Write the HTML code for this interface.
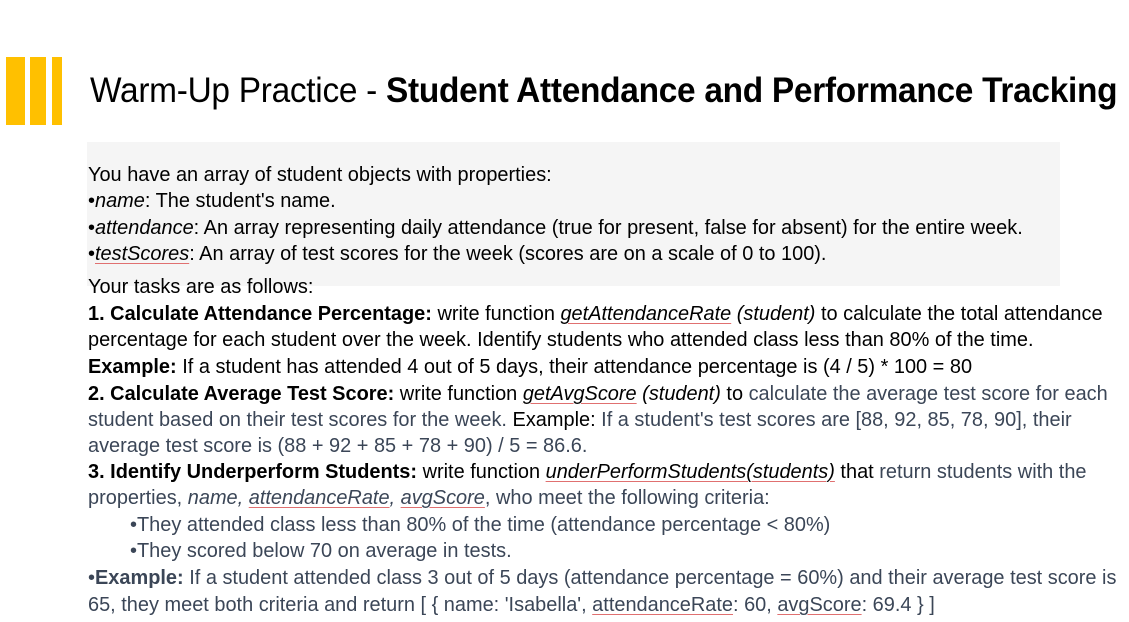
<!DOCTYPE html>
<html><head><meta charset="utf-8"><style>
body{margin:0;width:1129px;height:622px;background:#fff;position:relative;overflow:hidden;font-family:"Liberation Sans",sans-serif;}
.bar{position:absolute;top:57px;height:68px;background:#ffc000;}
.t{position:absolute;left:90px;top:71px;font-size:35px;white-space:nowrap;color:#000;transform:scaleX(0.955);transform-origin:left;letter-spacing:-0.3px}
.box{position:absolute;left:87px;top:142px;width:973px;height:144px;background:#f5f5f5;}
.l{position:absolute;left:88px;font-size:20px;line-height:26px;white-space:nowrap;color:#000;transform:scaleX(0.997);transform-origin:left;}
.g{color:#3b4657}
.u{text-decoration:underline;text-decoration-color:#e07070;text-decoration-thickness:1px;text-underline-offset:3px}
</style></head><body>
<div class="bar" style="left:6px;width:19px"></div>
<div class="bar" style="left:30px;width:16px"></div>
<div class="bar" style="left:52px;width:10px"></div>
<div class="t">Warm-Up Practice - <b>Student Attendance and Performance Tracking</b></div>
<div class="box"></div>
<div class="l" style="top:162px">You have an array of student objects with properties:</div>
<div class="l" style="top:188px">•<i>name</i>: The student's name.</div>
<div class="l" style="top:215px">•<i>attendance</i>: An array representing daily attendance (true for present, false for absent) for the entire week.</div>
<div class="l" style="top:241px">•<i class="u">testScores</i>: An array of test scores for the week (scores are on a scale of 0 to 100).</div>
<div class="l" style="top:274px">Your tasks are as follows:</div>
<div class="l" style="top:301px"><b>1. Calculate Attendance Percentage:</b> write function <i class="u">getAttendanceRate</i> <i>(student)</i> to calculate the total attendance</div>
<div class="l" style="top:327px">percentage for each student over the week. Identify students who attended class less than 80% of the time.</div>
<div class="l" style="top:354px"><b>Example:</b> If a student has attended 4 out of 5 days, their attendance percentage is (4 / 5) * 100 = 80</div>
<div class="l" style="top:381px"><b>2. Calculate Average Test Score:</b> write function <i class="u">getAvgScore</i> <i>(student)</i> to <span class="g">calculate the average test score for each</span></div>
<div class="l g" style="top:407px">student based on their test scores for the week. <span style="color:#000">Example:</span> If a student's test scores are [88, 92, 85, 78, 90], their</div>
<div class="l g" style="top:433px">average test score is (88 + 92 + 85 + 78 + 90) / 5 = 86.6.</div>
<div class="l" style="top:459px"><b>3. Identify Underperform Students:</b> write function <i class="u">underPerformStudents(students)</i> that <span class="g">return students with the</span></div>
<div class="l g" style="top:485px">properties, <i>name, <span class="u">attendanceRate</span>, <span class="u">avgScore</span></i>, who meet the following criteria:</div>
<div class="l g" style="top:512px;left:130px">•They attended class less than 80% of the time (attendance percentage &lt; 80%)</div>
<div class="l g" style="top:538px;left:130px">•They scored below 70 on average in tests.</div>
<div class="l g" style="top:565px">•<b>Example:</b> If a student attended class 3 out of 5 days (attendance percentage = 60%) and their average test score is</div>
<div class="l g" style="top:592px">65, they meet both criteria and return [ { name: 'Isabella', <span class="u">attendanceRate</span>: 60, <span class="u">avgScore</span>: 69.4 } ]</div>
</body></html>
